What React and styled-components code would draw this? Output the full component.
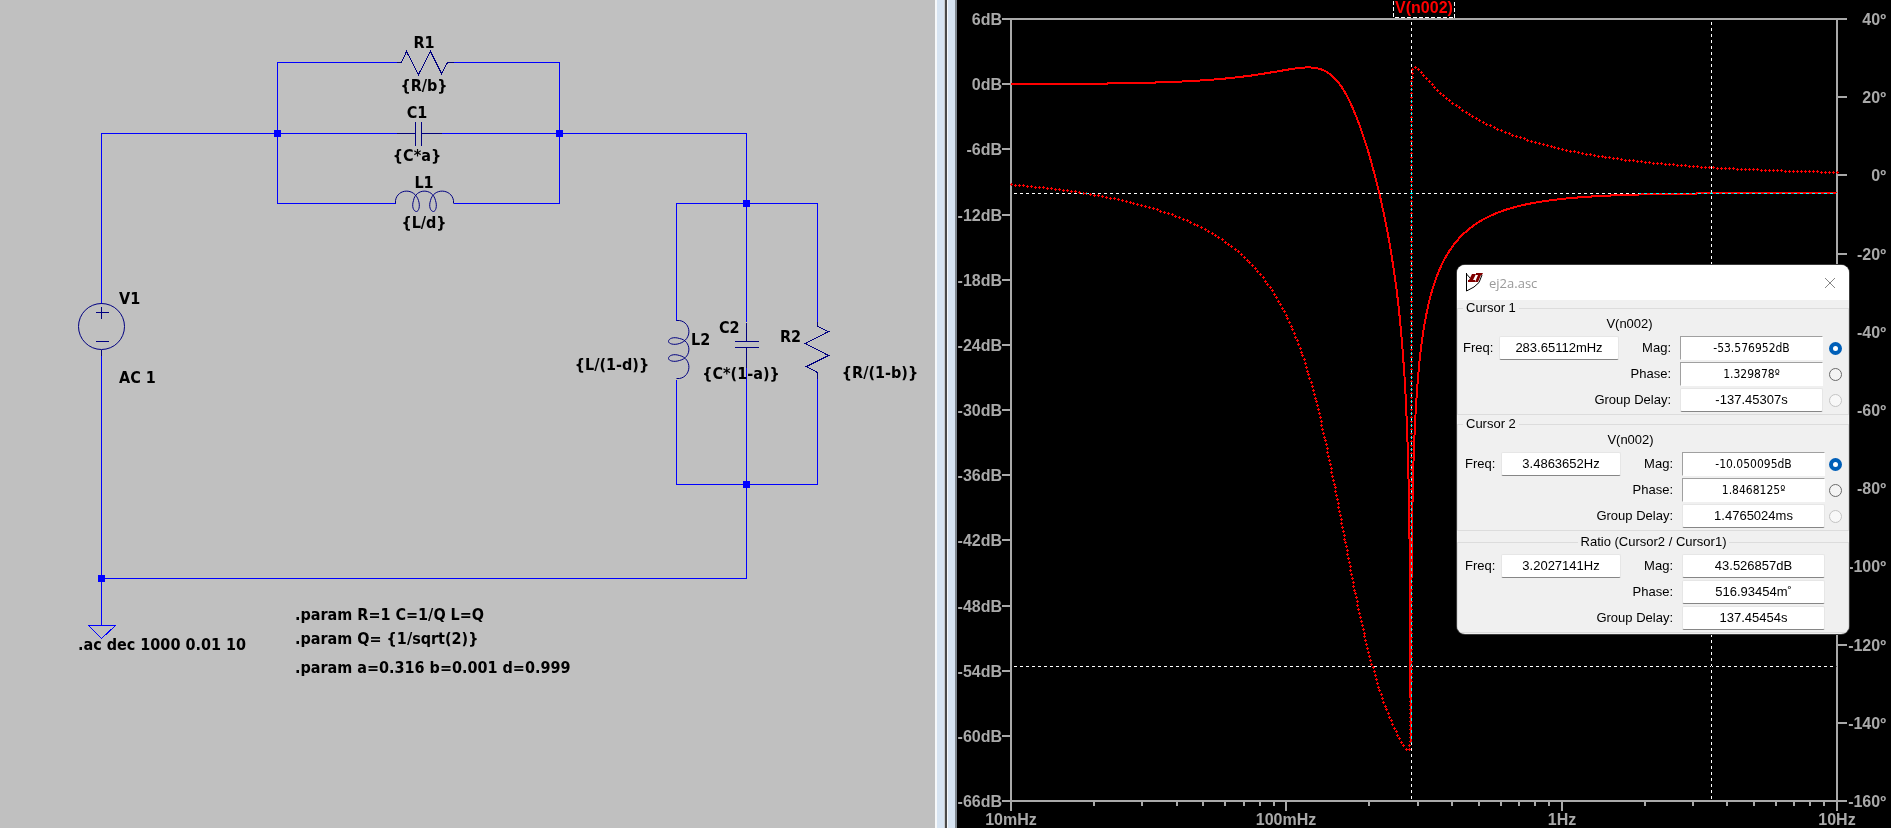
import React from "react";
import styled, { createGlobalStyle, css } from "styled-components";

const GlobalStyle = createGlobalStyle`
  *, *::before, *::after { box-sizing: border-box; }
  body { margin: 0; background: #000; }
`;

const condensed = '"DejaVu Sans Condensed", "DejaVu Sans", sans-serif';
const grotesque = '"Liberation Sans", Arial, sans-serif';

/* ---------- window layout ---------- */

const Workspace = styled.main`
  display: flex;
  min-height: 100vh;
`;

const SchematicPane = styled.section`
  flex: 935 1 0;
  min-width: 0;
  background: #c0c0c0;
`;

const Splitter = styled.div`
  display: flex;
  flex: none;
  width: 22px;
  border-left: 2px solid #f6f8fa;
  border-right: 2px solid #808890;
  background: #d7e4f2;
`;

const SplitterGroove = styled.div`
  width: 4px;
  margin-left: 7px;
  background: #4a4a4a;
  border-left: 1px solid #c8ccd0;
  border-right: 1px solid #f6f8fa;
`;

const PlotPane = styled.section`
  position: relative;
  flex: 934 1 0;
  min-width: 0;
  background: #000;
`;

const Drawing = styled.svg`
  display: block;
  width: 100%;
  height: auto;
`;

/* ---------- schematic ---------- */

const Wire = styled.path`
  fill: none;
  stroke: #0000ff;
  shape-rendering: crispEdges;
`;

const Symbol = styled.path`
  fill: none;
  stroke: #000080;
  shape-rendering: ${(p) => (p.$smooth ? "auto" : "crispEdges")};
`;

const Junction = styled.rect`
  fill: #0000ff;
`;

const SchematicText = styled.text`
  font: bold 16px ${condensed};
  fill: #000;
  text-anchor: ${(p) => (p.$centered ? "middle" : "start")};
`;

const RESISTOR = "M0 0H5L10 -11L22 12L34 -11L45 11L51 0H57";
const INDUCTOR =
  "M0 0V-3C2 -15 19 -16 23 -3C25 3 23 8 21 8C18 8 16 3 18 -3C20 -15 37 -16 40 -3C42 3 40 8 38 8C35 8 33 3 35 -3C38 -16 56 -15 58 -3V0";
const CAPACITOR = "M0 0H19M19 -12V12M25 -12V12M25 0H45";

const junctions = [
  [277, 133],
  [559, 133],
  [746, 203],
  [746, 484],
  [101, 578],
];

const labels = [
  { x: 424, y: 48, text: "R1", centered: true },
  { x: 424, y: 91, text: "{R/b}", centered: true },
  { x: 417, y: 118, text: "C1", centered: true },
  { x: 417, y: 161, text: "{C*a}", centered: true },
  { x: 424, y: 188, text: "L1", centered: true },
  { x: 424, y: 228, text: "{L/d}", centered: true },
  { x: 119, y: 304, text: "V1" },
  { x: 119, y: 383, text: "AC 1" },
  { x: 691, y: 345, text: "L2" },
  { x: 719, y: 333, text: "C2" },
  { x: 780, y: 342, text: "R2" },
  { x: 612, y: 370, text: "{L/(1-d)}", centered: true },
  { x: 741, y: 379, text: "{C*(1-a)}", centered: true },
  { x: 880, y: 378, text: "{R/(1-b)}", centered: true },
  { x: 78, y: 650, text: ".ac dec 1000 0.01 10" },
  { x: 295, y: 620, text: ".param R=1 C=1/Q L=Q" },
  { x: 295, y: 644, text: ".param Q= {1/sqrt(2)}" },
  { x: 295, y: 673, text: ".param a=0.316 b=0.001 d=0.999" },
];

function Schematic() {
  return (
    <Drawing viewBox="0 0 935 828" role="img" aria-label="Circuit schematic">
      <g transform="translate(0.5 0.5)">
        <Wire d="M101 303V133H396M441 133H746V321M396 62H277V203H395M453 62H559V203H453" />
        <Wire d="M676 320V203H817V321M676 379V484H817V378M746 366V578H101M101 349V625" />
        <Wire d="M88 625H115L101 638Z" />
        <Symbol d={RESISTOR} transform="translate(396 62)" />
        <Symbol d={CAPACITOR} transform="translate(396 133)" />
        <Symbol d={INDUCTOR} transform="translate(395 203)" $smooth />
        <Symbol d={INDUCTOR} transform="translate(676 320) rotate(90)" $smooth />
        <Symbol d={CAPACITOR} transform="translate(746 322) rotate(90)" />
        <Symbol d={RESISTOR} transform="translate(817 321) rotate(90)" />
        <Symbol d="M78 326a23 23 0 1 0 46 0a23 23 0 1 0 -46 0" $smooth />
        <Symbol d="M95 312H108M101 306V318M95 341H108M101 349V355" />
      </g>
      {labels.map((l) => (
        <SchematicText key={l.text} x={l.x} y={l.y} $centered={l.centered}>
          {l.text}
        </SchematicText>
      ))}
      {junctions.map(([x, y]) => (
        <Junction key={`${x}-${y}`} x={x - 3} y={y - 3} width="7" height="7" />
      ))}
    </Drawing>
  );
}

/* ---------- frequency response plot ---------- */

const AXIS = { left: 54, right: 880, top: 19, bottom: 801 };
const DECADE = (AXIS.right - AXIS.left) / 3;
const HEIGHT = AXIS.bottom - AXIS.top;

const xOf = (hz) => AXIS.left + (Math.log10(hz) + 2) * DECADE;
const yOfDb = (db) => AXIS.top + ((6 - db) / 72) * HEIGHT;
const yOfDeg = (deg) => AXIS.top + ((40 - deg) / 200) * HEIGHT;

function response(hz) {
  const [a, b, d] = [0.316, 0.001, 0.999];
  const w = 2 * Math.PI * hz;
  const C = Math.SQRT2;
  const L = Math.SQRT1_2;
  const numIm = w * C * a - d / (w * L);
  const denIm = w * C - 1 / (w * L);
  return {
    db: 20 * Math.log10(Math.hypot(b, numIm) / Math.hypot(1, denIm)),
    deg: ((Math.atan2(numIm, b) - Math.atan2(denIm, 1)) * 180) / Math.PI,
  };
}

const sweep = Array.from({ length: 3001 }, (_, k) => {
  const hz = 10 ** (k / 1000 - 2);
  const { db, deg } = response(hz);
  return { x: xOf(hz), mag: yOfDb(Math.max(db, -60.7)), phase: yOfDeg(deg) };
});

const magnitudePath =
  "M" + sweep.map((p) => `${p.x.toFixed(1)} ${p.mag.toFixed(1)}`).join("L");

/* Small plus marks spread evenly along the phase trace. */
function phaseMarks(spacing) {
  const marks = [];
  let carry = 0;
  for (let i = 1; i < sweep.length; i++) {
    const p = sweep[i - 1];
    const q = sweep[i];
    const len = Math.hypot(q.x - p.x, q.phase - p.phase);
    let at = carry;
    while (at < len) {
      const t = at / len;
      const x = Math.round(p.x + (q.x - p.x) * t);
      const y = Math.round(p.phase + (q.phase - p.phase) * t) - 1;
      marks.push(`M${x - 1} ${y}h3v1h-3zM${x} ${y - 1}h1v3h-1z`);
      at += spacing;
    }
    carry = at - len;
  }
  return marks.join("");
}
const phasePath = phaseMarks(4);

const AxisLine = styled.path`
  fill: none;
  stroke: #a9a9a9;
  stroke-width: 2;
  shape-rendering: crispEdges;
`;

const AxisText = styled.text`
  font: bold 16px ${grotesque};
  fill: #a9a9a9;
  text-anchor: ${(p) => p.$anchor};
`;

const Magnitude = styled.path`
  fill: none;
  stroke: #ff0000;
  stroke-width: 2;
  shape-rendering: crispEdges;
`;

const Phase = styled.path`
  fill: #ff0000;
  shape-rendering: crispEdges;
`;

const Cursor = styled.path`
  fill: none;
  stroke: #fff;
  stroke-dasharray: 3 3;
  shape-rendering: crispEdges;
  mix-blend-mode: difference;
`;

const TraceBox = styled.path`
  fill: none;
  stroke: #fff;
  stroke-dasharray: 4 2;
  shape-rendering: crispEdges;
`;

const TraceName = styled.text`
  font: bold 16px ${grotesque};
  fill: #ff0000;
  text-anchor: middle;
`;

const dbTicks = Array.from({ length: 13 }, (_, i) => 6 - i * 6);
const degTicks = Array.from({ length: 11 }, (_, i) => 40 - i * 20);
const hzTicks = ["10mHz", "100mHz", "1Hz", "10Hz"];

const minorTicks = [0, 1, 2]
  .flatMap((dec) =>
    [2, 3, 4, 5, 6, 7, 8, 9].map((n) => Math.round(AXIS.left + (dec + Math.log10(n)) * DECADE))
  )
  .map((x) => `M${x} ${AXIS.bottom}V806`)
  .join("");

function Plot() {
  return (
    <Drawing viewBox="0 0 934 828" role="img" aria-label="Magnitude and phase of V(n002)">
      <AxisLine
        d={`M${AXIS.left} ${AXIS.top}V811M${AXIS.right} ${AXIS.top}V811M${AXIS.left} ${AXIS.top}H${AXIS.right}M${AXIS.left} ${AXIS.bottom}H${AXIS.right}`}
      />
      <AxisLine d={minorTicks} />
      {dbTicks.map((db) => {
        const y = Math.round(yOfDb(db));
        return (
          <g key={db}>
            <AxisLine d={`M45 ${y}H54`} />
            <AxisText x="45" y={y + 6} $anchor="end">{`${db}dB`}</AxisText>
          </g>
        );
      })}
      {degTicks.map((deg) => {
        const y = Math.round(yOfDeg(deg));
        return (
          <g key={deg}>
            <AxisLine d={`M880 ${y}H890`} />
            <AxisText x="929" y={y + 6} $anchor="end">{`${deg}º`}</AxisText>
          </g>
        );
      })}
      {hzTicks.map((label, i) => {
        const x = Math.round(AXIS.left + i * DECADE);
        return (
          <g key={label}>
            <AxisLine d={`M${x} ${AXIS.bottom}V811`} />
            <AxisText x={x} y="825" $anchor="middle">{label}</AxisText>
          </g>
        );
      })}
      <Magnitude d={magnitudePath} />
      <Phase d={phasePath} />
      <g transform="translate(0.5 0.5)">
        <TraceBox d="M436 0V17H497V0" />
      </g>
      <TraceName x="467" y="13">V(n002)</TraceName>
      <Cursor d="M57 193.5H880" />
      <Cursor d="M57 666.5H880" />
      <Cursor d="M454.5 22V800" />
      <Cursor d="M754.5 22V800" />
    </Drawing>
  );
}

/* ---------- cursor read-out dialog ---------- */

const Dialog = styled.aside`
  position: absolute;
  top: 265px;
  right: 42px;
  width: 392px;
  padding-bottom: 1px;
  border-radius: 8px;
  overflow: hidden;
  background: #f0f0f0;
  box-shadow: 0 0 0 1px #3a3a3a;
  color: #000;
  font: 13px/16px ${grotesque};
`;

const TitleBar = styled.header`
  display: flex;
  align-items: center;
  height: 35px;
  padding: 0 11px 0 8px;
  background: #fff;
`;

const Title = styled.h1`
  flex: 1;
  margin: 0 0 0 6px;
  color: #999;
  font: 13px/20px "Open Sans", "Noto Sans", sans-serif;
`;

const CloseButton = styled.button`
  display: flex;
  padding: 2px;
  border: 0;
  background: none;
`;

const Group = styled.fieldset`
  min-width: 0;
  margin: ${(p) => p.$above}px 0 0;
  padding: 0 6px 2px ${(p) => 5 + p.$indent}px;
  border: 1px solid #dcdcdc;
`;

const GroupName = styled.legend`
  height: 16px;
  margin: ${(p) => (p.$centered ? "0 auto" : `0 0 0 ${-p.$indent}px`)};
  padding: 0 3px;
`;

const Trace = styled.p`
  margin: 0;
  padding-right: 46px;
  text-align: center;
`;

const Rows = styled.div`
  display: grid;
  gap: 2px;
  padding-top: 4px;
`;

const Row = styled.div`
  display: flex;
  align-items: center;
  height: 24px;
`;

const FreqLabel = styled.label`
  width: 36px;
`;

const ValueLabel = styled.label`
  flex: 1;
  padding-right: 9px;
  text-align: right;
`;

const Value = styled.input`
  width: ${(p) => (p.$narrow ? 120 : 143)}px;
  height: 24px;
  padding: 0 0 2px;
  border: 1px solid #e6e6e6;
  border-bottom-color: #868686;
  border-radius: 2px;
  background: #fff;
  color: #000;
  font: 13px/16px ${grotesque};
  text-align: center;
  outline: 0;
  ${(p) =>
    p.$sunken &&
    css`
      padding: 0;
      border-color: #a0a0a0 #fff #fff #a0a0a0;
      border-radius: 0;
      font: 12px/16px ${condensed};
    `}
`;

const RadioSlot = styled.span`
  display: flex;
  width: 13px;
  margin-left: ${(p) => 6 - p.$indent}px;
`;

const Radio = styled.input`
  appearance: none;
  width: 13px;
  height: 13px;
  margin: 0;
  border: 1px solid #6a6a6a;
  border-radius: 50%;
  background: #f4f4f4;
  &:checked {
    border: 4px solid #005fb8;
    background: #fff;
  }
  &:disabled {
    border-color: #c4c4c4;
    background: #f8f8f8;
  }
`;

function LogoIcon() {
  return (
    <svg width="18" height="19" viewBox="0 0 18 19" aria-hidden="true">
      <path d="M1.5 0V18L9 14L14 9.5L17 2M1.5 1L6 6" fill="none" stroke="#000" />
      <path d="M7 1H11L8 7H10V9H3V7H4Z" fill="#800000" />
      <path d="M11 0H18L17 2H16L13 9H10L13 2H11Z" fill="#800000" />
    </svg>
  );
}

function CloseIcon() {
  return (
    <svg width="12" height="12" viewBox="0 0 12 12" aria-hidden="true">
      <path d="M1 1L11 11M11 1L1 11" fill="none" stroke="#858585" />
    </svg>
  );
}

const groups = [
  {
    id: "cursor1",
    name: "Cursor 1",
    trace: "V(n002)",
    freq: "283.65112mHz",
    values: ["-53.576952dB", "1.329878º", "-137.45307s"],
    above: 0,
    indent: 0,
  },
  {
    id: "cursor2",
    name: "Cursor 2",
    trace: "V(n002)",
    freq: "3.4863652Hz",
    values: ["-10.050095dB", "1.8468125º", "1.4765024ms"],
    above: 1,
    indent: 2,
  },
  {
    id: "ratio",
    name: "Ratio (Cursor2 / Cursor1)",
    freq: "3.2027141Hz",
    values: ["43.526857dB", "516.93454m˚", "137.45454s"],
    above: 3,
    indent: 2,
  },
];
const quantities = ["Mag:", "Phase:", "Group Delay:"];

function CursorGroup({ group }) {
  const { id, name, trace, freq, values, above, indent } = group;
  return (
    <Group $above={above} $indent={indent}>
      <GroupName $centered={!trace} $indent={indent}>
        {name}
      </GroupName>
      {trace && <Trace>{trace}</Trace>}
      <Rows>
        {quantities.map((quantity, i) => (
          <Row key={quantity}>
            {i === 0 && (
              <>
                <FreqLabel htmlFor={`${id}-freq`}>Freq:</FreqLabel>
                <Value id={`${id}-freq`} defaultValue={freq} readOnly $narrow />
              </>
            )}
            <ValueLabel htmlFor={`${id}-${i}`}>{quantity}</ValueLabel>
            <Value id={`${id}-${i}`} defaultValue={values[i]} readOnly $sunken={Boolean(trace) && i < 2} />
            <RadioSlot $indent={indent}>
              {trace && (
                <Radio
                  type="radio"
                  name={id}
                  aria-label={`${name} ${quantity}`}
                  defaultChecked={i === 0}
                  disabled={i === 2}
                />
              )}
            </RadioSlot>
          </Row>
        ))}
      </Rows>
    </Group>
  );
}

export default function App() {
  return (
    <>
      <GlobalStyle />
      <Workspace>
        <SchematicPane>
          <Schematic />
        </SchematicPane>
        <Splitter>
          <SplitterGroove />
        </Splitter>
        <PlotPane>
          <Plot />
          <Dialog aria-label="ej2a.asc">
            <TitleBar>
              <LogoIcon />
              <Title>ej2a.asc</Title>
              <CloseButton type="button" aria-label="Close">
                <CloseIcon />
              </CloseButton>
            </TitleBar>
            {groups.map((group) => (
              <CursorGroup key={group.id} group={group} />
            ))}
          </Dialog>
        </PlotPane>
      </Workspace>
    </>
  );
}
